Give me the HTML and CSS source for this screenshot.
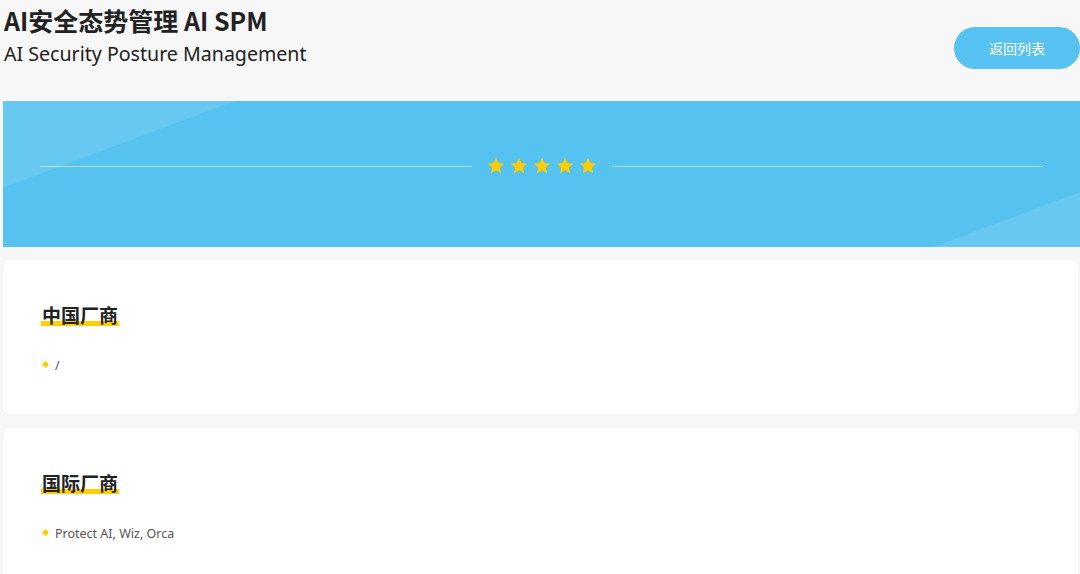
FILE: index.html
```html
<!DOCTYPE html>
<html lang="zh">
<head>
<meta charset="utf-8">
<link rel="stylesheet" href="styles.css">
</head>
<body>
<div class="page">
  <header class="head">
    <div class="titles">
      <h1 class="title">AI安全态势管理 AI SPM</h1>
      <p class="subtitle">AI Security Posture Management</p>
    </div>
    <a class="back" href="#">返回列表</a>
  </header>

  <section class="banner">
    <span class="line"></span>
    <div class="stars">
      <svg viewBox="0 0 24 24"><path d="M12 2.2l2.9 6.3 6.9.7-5.2 4.6 1.5 6.8L12 17.1l-6.1 3.5 1.5-6.8-5.2-4.6 6.9-.7z"/></svg>
      <svg viewBox="0 0 24 24"><path d="M12 2.2l2.9 6.3 6.9.7-5.2 4.6 1.5 6.8L12 17.1l-6.1 3.5 1.5-6.8-5.2-4.6 6.9-.7z"/></svg>
      <svg viewBox="0 0 24 24"><path d="M12 2.2l2.9 6.3 6.9.7-5.2 4.6 1.5 6.8L12 17.1l-6.1 3.5 1.5-6.8-5.2-4.6 6.9-.7z"/></svg>
      <svg viewBox="0 0 24 24"><path d="M12 2.2l2.9 6.3 6.9.7-5.2 4.6 1.5 6.8L12 17.1l-6.1 3.5 1.5-6.8-5.2-4.6 6.9-.7z"/></svg>
      <svg viewBox="0 0 24 24"><path d="M12 2.2l2.9 6.3 6.9.7-5.2 4.6 1.5 6.8L12 17.1l-6.1 3.5 1.5-6.8-5.2-4.6 6.9-.7z"/></svg>
    </div>
    <span class="line"></span>
  </section>

  <section class="card">
    <h2 class="card-title"><span>中国厂商</span></h2>
    <ul class="list">
      <li>/</li>
    </ul>
  </section>

  <section class="card">
    <h2 class="card-title"><span>国际厂商</span></h2>
    <ul class="list">
      <li>Protect AI, Wiz, Orca</li>
    </ul>
  </section>
</div>
</body>
</html>
```

FILE: styles.css
```css
html, body {
  margin: 0;
  padding: 0;
  background: #f7f7f7;
  font-family: "Noto Sans", "Noto Sans CJK SC", sans-serif;
  color: #222;
}

.page {
  padding: 0 0 0 3px;
}

.head {
  display: flex;
  justify-content: space-between;
  align-items: flex-start;
  height: 101px;
}

.titles {
  padding: 4px 0 0 1px;
}

.title {
  margin: 0;
  font-size: 25px;
  line-height: 32px;
  font-weight: 700;
  color: #222;
  font-family: "Noto Sans CJK SC", sans-serif;
}

.subtitle {
  margin: 5px 0 0;
  font-size: 19.6px;
  line-height: 26px;
  color: #222;
}

.back {
  margin-top: 27px;
  width: 126px;
  height: 42px;
  border-radius: 21px;
  background: #55c2f1;
  color: #fff;
  font-size: 14px;
  display: flex;
  align-items: center;
  justify-content: center;
  text-decoration: none;
  font-family: "Noto Sans CJK SC", sans-serif;
}

.banner {
  position: relative;
  height: 146px;
  background: #56c2f0;
  display: flex;
  align-items: flex-start;
  padding: 0 37px;
  overflow: hidden;
}

.banner::before,
.banner::after {
  content: "";
  position: absolute;
  background: rgba(255, 255, 255, 0.1);
}

.banner::before {
  left: 0;
  top: 0;
  width: 232px;
  height: 87px;
  clip-path: polygon(0 0, 100% 0, 0 100%);
}

.banner::after {
  right: 0;
  bottom: 0;
  width: 147px;
  height: 55px;
  clip-path: polygon(100% 0, 100% 100%, 0 100%);
}

.line {
  flex: 1;
  height: 1px;
  margin-top: 65px;
  background: rgba(255, 255, 255, 0.55);
}

.stars {
  display: flex;
  gap: 3px;
  margin: 55px 14px 0;
}

.stars svg {
  width: 20px;
  height: 20px;
  fill: #ffcc00;
  display: block;
}

.card {
  background: #fff;
  margin: 13px 2px 14px 0;
  border-radius: 6px;
  padding: 45px 39px 30px;
  box-shadow: 0 0 4px rgba(0, 0, 0, 0.03);
  height: 79px;
}

.card-title {
  margin: 0;
  font-size: 19px;
  line-height: 20px;
  font-weight: 700;
  color: #222;
  font-family: "Noto Sans CJK SC", sans-serif;
}

.card-title span {
  display: inline-block;
  margin-left: -1px;
  padding: 0 1px 1px;
  background: linear-gradient(#ffd000, #ffd000) no-repeat left bottom / 100% 5px;
}

.list {
  list-style: none;
  margin: 30px 0 0;
  padding: 0;
}

.list li {
  position: relative;
  padding-left: 13px;
  font-size: 12.5px;
  line-height: 20px;
  color: #555;
}

.list li::before {
  content: "";
  position: absolute;
  left: 1px;
  top: 6px;
  width: 5px;
  height: 5px;
  background: #ffcc00;
  transform: rotate(45deg);
}
```
